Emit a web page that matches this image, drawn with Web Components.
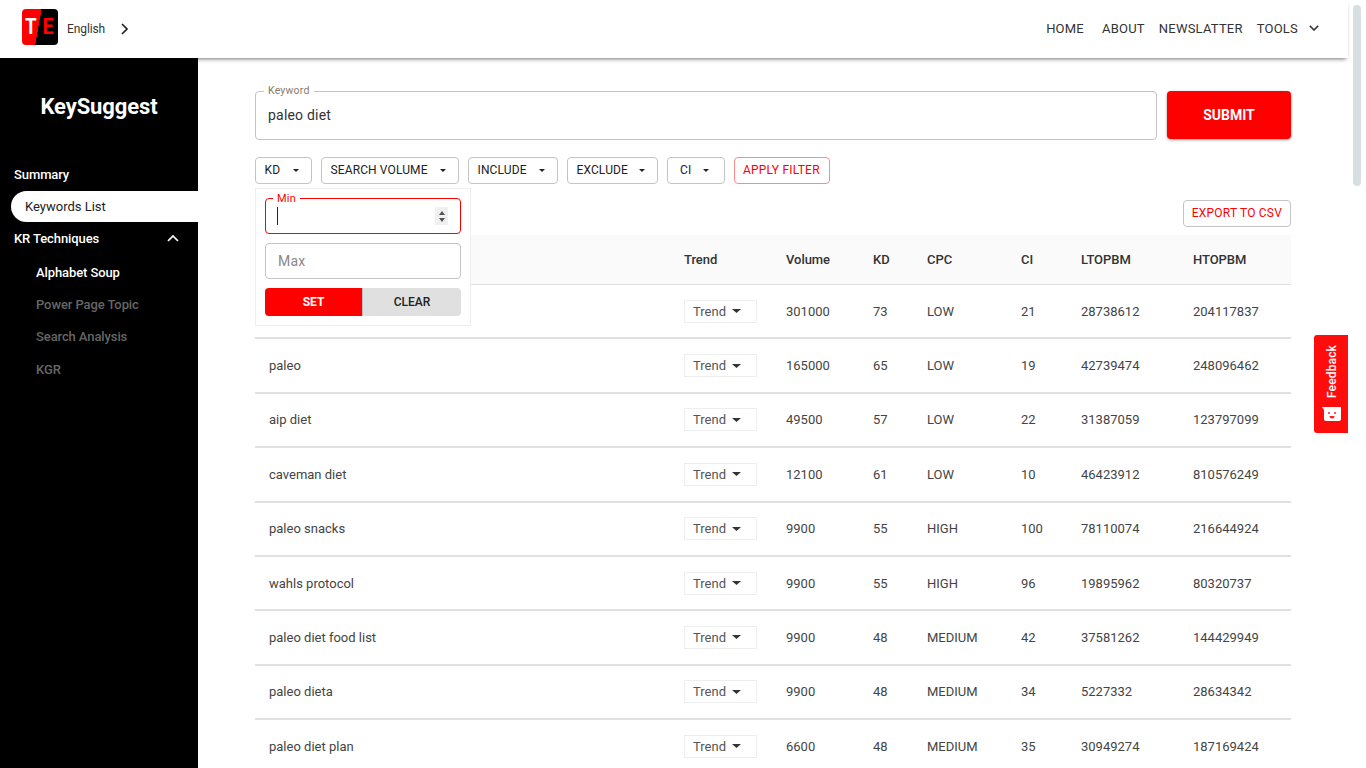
<!DOCTYPE html>
<html>
<head>
<meta charset="utf-8">
<title>KeySuggest</title>
<style>
  html, body { margin: 0; height: 100%; overflow: hidden; background: #fff; }
  body { font-family: Roboto, "Liberation Sans", sans-serif; color: #222; }
</style>
</head>
<body>
<key-app></key-app>
<script>
const CARET = `<svg width="6" height="3" viewBox="0 0 6 3"><path d="M0 0h6L3 3z" fill="currentColor"/></svg>`;

class TopBar extends HTMLElement {
  constructor() {
    super();
    this.attachShadow({ mode: "open" });
    this.shadowRoot.innerHTML = /* html */`
    <style>
      :host { display: flex; align-items: center; height: 58px; width: 1348px; background: #fff;
        box-shadow: 0 3px 4px -2px rgba(0,0,0,.55); position: relative; z-index: 2; box-sizing: border-box; padding: 0 29px 0 22px; }
      .logo { width: 36px; height: 36px; border-radius: 4px; display: flex; align-items: center; justify-content: center;
        background: linear-gradient(100deg, #f00 0 46%, #000 46% 100%); font: 700 22px/36px Roboto, sans-serif; margin-top: -4px; }
      .logo b { color: #fff; font-weight: 700; transform: scaleX(.85); margin-left: -2px; }
      .logo i { color: #f00; font-style: normal; margin-left: 4px; transform: scaleX(.9); }
      .lang { font-size: 12px; color: #333; margin-left: 9px; letter-spacing: -.1px; margin-top: -1px; }
      .next { margin-left: 16px; display: flex; }
      nav { margin-left: auto; display: flex; align-items: center; font-size: 13px; letter-spacing: .22px; color: #333; margin-top: -2px; }
      nav span { white-space: nowrap; }
      nav span:nth-child(2) { margin-left: 18px; }
      nav span:nth-child(3) { margin-left: 14px; }
      nav span:nth-child(4) { margin-left: 14px; }
      nav svg { margin-left: 11px; }
    </style>
    <div class="logo"><b>T</b><i>E</i></div>
    <span class="lang">English</span>
    <span class="next"><svg width="8" height="12" viewBox="0 0 8 12"><path d="M1 1l5 5-5 5" fill="none" stroke="#222" stroke-width="1.7"/></svg></span>
    <nav>
      <span>HOME</span><span>ABOUT</span><span>NEWSLATTER</span><span>TOOLS</span>
      <svg width="10" height="6" viewBox="0 0 10 6"><path d="M.8.8L5 5 9.2.8" fill="none" stroke="#333" stroke-width="1.6"/></svg>
    </nav>`;
  }
}
customElements.define("top-bar", TopBar);

class SideItem extends HTMLElement {
  constructor() {
    super();
    this.attachShadow({ mode: "open" });
    this.shadowRoot.innerHTML = /* html */`
    <style>
      :host { display: flex; align-items: center; height: 32px; font-size: 13px; color: #fff; padding-left: 14px; font-weight: 500; letter-spacing: -.1px; }
      :host([active]) { background: #fff; color: #222; margin: 1px 0 0 11px; padding-left: 14px; border-radius: 16px 0 0 16px; height: 31px; font-weight: 400; letter-spacing: 0; }
      :host([sub]) { padding-left: 36px; }
      :host([dim]) { color: #666; }
      :host(.gap-2) { margin-top: 2px; }
      :host(.gap-1) { margin-top: 1px; }
      ::slotted(svg) { margin-left: auto; margin-right: 19px; }
    </style>
    <slot></slot>`;
  }
}
customElements.define("side-item", SideItem);

class SideBar extends HTMLElement {
  constructor() {
    super();
    this.attachShadow({ mode: "open" });
    this.shadowRoot.innerHTML = /* html */`
    <style>
      :host { display: block; width: 198px; flex: none; background: #000; height: 710px; box-sizing: border-box; }
      h1 { margin: 0; padding-top: 35px; height: 100px; box-sizing: border-box; font-size: 22px; line-height: 28px; letter-spacing: -.12px; text-align: center; color: #fff; font-weight: 700; }
    </style>
    <h1>KeySuggest</h1>
    <slot></slot>`;
  }
}
customElements.define("side-bar", SideBar);

class SearchBox extends HTMLElement {
  constructor() {
    super();
    this.attachShadow({ mode: "open" });
    this.shadowRoot.innerHTML = /* html */`
    <style>
      :host { display: flex; gap: 10px; }
      .field { flex: 1; height: 49px; box-sizing: border-box; border: 1px solid #c4c4c4; border-radius: 4px; position: relative;
        display: flex; align-items: center; padding: 0 0 2px 12px; font-size: 14px; color: #333; letter-spacing: .2px; }
      label { position: absolute; left: 8px; top: -7px; background: #fff; padding: 0 4px; font-size: 10.5px; line-height: 12px; color: #8a7a6a; }
      button { width: 124px; height: 48px; border: 0; border-radius: 4px; background: #f00; color: #fff; font: 700 14px Roboto, sans-serif;
        box-shadow: 0 1px 3px rgba(0,0,0,.4); }
    </style>
    <div class="field"><label>Keyword</label>paleo diet</div>
    <button>SUBMIT</button>`;
  }
}
customElements.define("search-box", SearchBox);

class FilterChip extends HTMLElement {
  constructor() {
    super();
    this.attachShadow({ mode: "open" });
    this.shadowRoot.innerHTML = /* html */`
    <style>
      :host { display: inline-flex; align-items: center; flex: none; height: 27px; box-sizing: border-box; border: 1px solid #c4c4c4; border-radius: 4px;
        padding: 0 12px 1px 8.500px; font-size: 12px; color: #222; letter-spacing: .12px; white-space: nowrap; }
      span { display: flex; margin-left: auto; color: #222; }
      :host([link]) { color: #f00; padding: 0 8px 1px 8px; letter-spacing: .2px; }
      :host([link]) span { display: none; }
      :host([apply]) { border-color: #f88; }
      :host([wide]) { padding: 0 15px 1px 12px; }
    </style>
    <slot></slot><span>${CARET}</span>`;
  }
}
customElements.define("filter-chip", FilterChip);

class KdPopover extends HTMLElement {
  constructor() {
    super();
    this.attachShadow({ mode: "open" });
    this.shadowRoot.innerHTML = /* html */`
    <style>
      :host { position: absolute; left: 0; top: 31px; width: 216px; height: 138px; box-sizing: border-box; background: #fff; border: 1px solid #eee;
        padding: 9px; z-index: 1; }
      .in { height: 36px; box-sizing: border-box; border: 1px solid #c4c4c4; border-radius: 4px; position: relative; display: flex; align-items: center;
        padding-left: 12px; font-size: 14px; color: #888; letter-spacing: .25px; }
      .in + .in { margin-top: 9px; }
      .min { border-color: #f00; }
      .min label { position: absolute; left: 7px; top: -6px; background: #fff; padding: 0 4px; font-size: 11px; line-height: 12px; color: #f00; }
      .cursor { width: 1px; height: 18px; background: #222; margin-left: -1px; margin-top: -1px; }
      .spin { position: absolute; right: 12px; top: 8px; width: 13px; height: 18px; background: #f0f0f0; display: flex; flex-direction: column; align-items: center; justify-content: center; gap: 3px; }
      .btns { display: flex; margin-top: 9px; height: 28px; border-radius: 4px; overflow: hidden; font-size: 12px; font-weight: 500; }
      .btns div { display: flex; align-items: center; justify-content: center; }
      .set { width: 97px; background: #f00; color: #fff; font-weight: 700; }
      .clear { flex: 1; background: #e0e0e0; color: #222; border-left: 1px solid #bbb; }
    </style>
    <div class="in min"><label>Min</label><div class="cursor"></div>
      <div class="spin">
        <svg width="6" height="4" viewBox="0 0 6 4"><path d="M0 4h6L3 0z" fill="#555"/></svg>
        <svg width="6" height="4" viewBox="0 0 6 4"><path d="M0 0h6L3 4z" fill="#555"/></svg>
      </div>
    </div>
    <div class="in">Max</div>
    <div class="btns"><div class="set">SET</div><div class="clear">CLEAR</div></div>`;
  }
}
customElements.define("kd-popover", KdPopover);

const COLS = "429px 102px 87px 54px 94px 60px 112px 98px";

class KeywordRow extends HTMLElement {
  constructor() {
    super();
    this.attachShadow({ mode: "open" });
  }

  connectedCallback() {
    const cells = this.getAttribute("cells").split("|");
    this.shadowRoot.innerHTML = /* html */`
    <style>
      :host { display: grid; grid-template-columns: ${COLS}; align-items: center; height: 54.375px; box-sizing: border-box; border-bottom: 2px solid #e0e0e0;
        font-size: 13px; color: #444; }
      .kw { padding-left: 14px; }
      .trend { width: 73px; height: 23px; box-sizing: border-box; border: 1px solid #eee; display: flex; align-items: center; padding-left: 8px; gap: 6px; color: #555; }
      .trend svg { color: #333; }
    </style>
    <div class="kw">${cells[0]}</div>
    <div><span class="trend">Trend <svg width="9" height="4" viewBox="0 0 9 4"><path d="M0 0h9L4.500 4z" fill="currentColor"/></svg></span></div>
    ${cells.slice(1).map(c => `<div>${c}</div>`).join("")}`;
  }
}
customElements.define("keyword-row", KeywordRow);

class KeywordTable extends HTMLElement {
  constructor() {
    super();
    this.attachShadow({ mode: "open" });
    this.shadowRoot.innerHTML = /* html */`
    <style>
      :host { display: block; }
      .head { display: grid; grid-template-columns: ${COLS}; align-items: center; height: 50px; box-sizing: border-box; background: #fafafa; border-bottom: 1px solid #e0e0e0;
        font-size: 13px; font-weight: 500; color: #333; letter-spacing: -.05px; }
    </style>
    <div class="head"><div></div><div>Trend</div><div>Volume</div><div>KD</div><div>CPC</div><div>CI</div><div>LTOPBM</div><div>HTOPBM</div></div>
    <slot></slot>`;
  }
}
customElements.define("keyword-table", KeywordTable);

class FeedbackTab extends HTMLElement {
  constructor() {
    super();
    this.attachShadow({ mode: "open" });
    this.shadowRoot.innerHTML = /* html */`
    <style>
      :host { position: absolute; left: 1314px; top: 335px; width: 34px; height: 98px; background: #ff0d0d; border-radius: 3px 0 0 3px; z-index: 3;
        display: flex; flex-direction: column; align-items: center; color: #fff; }
      span { writing-mode: vertical-rl; transform: rotate(180deg); font-size: 12px; font-weight: 500; margin: 10px 0 0 2px; line-height: 12px; letter-spacing: .15px; }
      svg { margin-top: 9px; }
    </style>
    <span>Feedback</span>
    <svg width="19" height="14" viewBox="0 0 19 14">
      <path d="M3 0h16v12a2 2 0 0 1-2 2H4a2 2 0 0 1-2-2V3L0 0z" fill="#fff"/>
      <circle cx="7" cy="6" r="1" fill="#f22"/><circle cx="13" cy="6" r="1" fill="#f22"/>
      <path d="M7.500 9h5a2.500 2.500 0 0 1-5 0z" fill="#f22"/>
    </svg>`;
  }
}
customElements.define("feedback-tab", FeedbackTab);

// first keyword sits behind the open KD popover, so it stays empty
const ROWS = [
  "|301000|73|LOW|21|28738612|204117837",
  "paleo|165000|65|LOW|19|42739474|248096462",
  "aip diet|49500|57|LOW|22|31387059|123797099",
  "caveman diet|12100|61|LOW|10|46423912|810576249",
  "paleo snacks|9900|55|HIGH|100|78110074|216644924",
  "wahls protocol|9900|55|HIGH|96|19895962|80320737",
  "paleo diet food list|9900|48|MEDIUM|42|37581262|144429949",
  "paleo dieta|9900|48|MEDIUM|34|5227332|28634342",
  "paleo diet plan|6600|48|MEDIUM|35|30949274|187169424"
];

class KeyApp extends HTMLElement {
  constructor() {
    super();
    this.attachShadow({ mode: "open" });
    this.shadowRoot.innerHTML = /* html */`
    <style>
      :host { display: block; height: 768px; overflow: hidden; position: relative; }
      .body { display: flex; }
      main { width: 1036px; padding: 33px 58px 0 57px; flex: none; }
      .filters { display: flex; gap: 9px; margin-top: 17px; position: relative; }
      .export { display: flex; justify-content: flex-end; margin-top: 16px; margin-bottom: 8px; }
      .thumb { position: absolute; left: 1353px; top: 5px; width: 8px; height: 181px; background: #d8dfe3; border-radius: 4px; }
    </style>
    <top-bar></top-bar>
    <div class="body">
      <side-bar>
        <side-item>Summary</side-item>
        <side-item active>Keywords List</side-item>
        <side-item>KR Techniques
          <svg width="12" height="7" viewBox="0 0 12 7"><path d="M1 6l5-5 5 5" fill="none" stroke="#fff" stroke-width="1.7"/></svg>
        </side-item>
        <side-item sub class="gap-2">Alphabet Soup</side-item>
        <side-item sub dim>Power Page Topic</side-item>
        <side-item sub dim>Search Analysis</side-item>
        <side-item sub dim class="gap-1">KGR</side-item>
      </side-bar>
      <main>
        <search-box></search-box>
        <div class="filters">
          <filter-chip style="width:57px">KD</filter-chip>
          <filter-chip style="width:138px">SEARCH VOLUME</filter-chip>
          <filter-chip style="width:90px">INCLUDE</filter-chip>
          <filter-chip style="width:91px">EXCLUDE</filter-chip>
          <filter-chip wide style="width:58px">CI</filter-chip>
          <filter-chip link apply style="width:96px">APPLY FILTER</filter-chip>
          <kd-popover></kd-popover>
        </div>
        <div class="export"><filter-chip link>EXPORT TO CSV</filter-chip></div>
        <keyword-table>${ROWS.map(r => `<keyword-row cells="${r}"></keyword-row>`).join("")}</keyword-table>
      </main>
    </div>
    <feedback-tab></feedback-tab>
    <div class="thumb"></div>`;
  }
}
customElements.define("key-app", KeyApp);
</script>
</body>
</html>
